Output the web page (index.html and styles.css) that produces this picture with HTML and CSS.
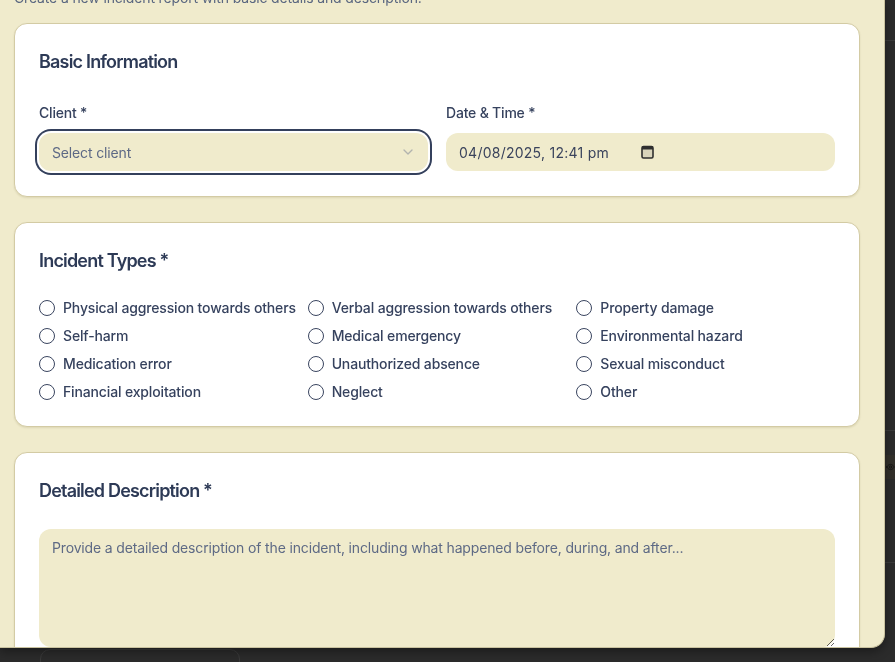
FILE: index.html
```html
<!DOCTYPE html>
<html lang="en">
<head>
<meta charset="utf-8">
<title>New Incident Report</title>
<link rel="stylesheet" href="styles.css">
</head>
<body>
<div class="behind" aria-hidden="true">
  <div class="behind-row r1"></div>
  <div class="behind-row r2"></div>
  <div class="behind-gap"></div>
  <div class="behind-band">
    <svg class="behind-eye" width="16" height="16" viewBox="0 0 24 24" fill="none" stroke="#111" stroke-width="2" stroke-linecap="round" stroke-linejoin="round"><path d="M2 12s3.5-7 10-7 10 7 10 7-3.5 7-10 7S2 12 2 12z"/><circle cx="12" cy="12" r="3"/></svg>
  </div>
  <div class="behind-row r3"></div>
  <div class="behind-foot"><span class="behind-btn"></span></div>
</div>

<div class="modal" role="dialog" aria-label="New incident report">
  <div class="modal-body">
    <p class="subtitle">Create a new incident report with basic details and description.</p>

    <section class="card card-basic">
      <h2 class="card-title">Basic Information</h2>
      <div class="field-grid">
        <div class="field">
          <label class="label">Client *</label>
          <button class="select" type="button">
            <span>Select client</span>
            <svg class="chevron" width="16" height="16" viewBox="0 0 24 24" fill="none" stroke="currentColor" stroke-width="2" stroke-linecap="round" stroke-linejoin="round"><path d="m6 9 6 6 6-6"/></svg>
          </button>
        </div>
        <div class="field">
          <label class="label">Date &amp; Time *</label>
          <div class="date-input">
            <span class="date-text">04/08/2025, 12:41 pm</span>
            <svg class="cal" width="13" height="14" viewBox="0 0 13 14"><rect x="1" y="1.5" width="11" height="11.5" rx="1.5" fill="#d9d4bb" stroke="#2f2f2f" stroke-width="1.6"/><rect x="1" y="1.5" width="11" height="3" fill="#2f2f2f"/></svg>
          </div>
        </div>
      </div>
    </section>

    <section class="card card-types">
      <h2 class="card-title">Incident Types *</h2>
      <div class="radio-grid">
        <label class="radio-item"><input type="radio" name="type" class="radio"><span>Physical aggression towards others</span></label>
        <label class="radio-item"><input type="radio" name="type" class="radio"><span>Verbal aggression towards others</span></label>
        <label class="radio-item"><input type="radio" name="type" class="radio"><span>Property damage</span></label>
        <label class="radio-item"><input type="radio" name="type" class="radio"><span>Self-harm</span></label>
        <label class="radio-item"><input type="radio" name="type" class="radio"><span>Medical emergency</span></label>
        <label class="radio-item"><input type="radio" name="type" class="radio"><span>Environmental hazard</span></label>
        <label class="radio-item"><input type="radio" name="type" class="radio"><span>Medication error</span></label>
        <label class="radio-item"><input type="radio" name="type" class="radio"><span>Unauthorized absence</span></label>
        <label class="radio-item"><input type="radio" name="type" class="radio"><span>Sexual misconduct</span></label>
        <label class="radio-item"><input type="radio" name="type" class="radio"><span>Financial exploitation</span></label>
        <label class="radio-item"><input type="radio" name="type" class="radio"><span>Neglect</span></label>
        <label class="radio-item"><input type="radio" name="type" class="radio"><span>Other</span></label>
      </div>
    </section>

    <section class="card">
      <h2 class="card-title">Detailed Description *</h2>
      <textarea class="textarea" placeholder="Provide a detailed description of the incident, including what happened before, during, and after..."></textarea>
    </section>
  </div>
</div>
</body>
</html>
```

FILE: styles.css
```css
* { box-sizing: border-box; }

html, body {
  margin: 0;
  height: 100%;
}

body {
  background: #2b2b2b;
  font-family: Inter, "Noto Sans", Arial, sans-serif;
  letter-spacing: -0.15px;
  overflow: hidden;
}

/* page behind the overlay */
.behind { height: 662px; }
.behind-row { border-bottom: 1px solid #3a3a3a; }
.r1 { height: 41px; }
.r2 { height: 390px; }
.behind-gap { height: 24px; }
.behind-band {
  height: 24px;
  background: #312f2a;
  display: flex;
  align-items: center;
  padding-left: 886px;
}
.r3 { height: 84px; }
.behind-foot { padding: 86px 0 0 40px; }
.behind-btn {
  display: block;
  width: 200px;
  height: 30px;
  border: 1px solid #3a3a3a;
  border-radius: 10px;
}

/* dialog */
.modal {
  position: fixed;
  top: 0;
  left: 0;
  width: 885px;
  height: 648px;
  background: #f0ebcc;
  border-right: 1px solid #c9c29f;
  border-bottom: 1px solid #c9c29f;
  border-radius: 0 0 14px 0;
  overflow: hidden;
  box-shadow: 0 4px 10px rgba(0, 0, 0, 0.35);
}

.modal-body {
  margin-top: -12px;
  padding: 0 24px 0 14px;
}

.subtitle {
  margin: 0 0 15px;
  font-size: 14px;
  line-height: 20px;
  color: #5a6780;
}

.card {
  background: #ffffff;
  border: 1px solid #d3cba4;
  border-radius: 13px;
  box-shadow: 0 1px 2px rgba(80, 70, 20, 0.12);
  padding: 24px;
  margin-bottom: 25px;
}

.card-basic { padding-bottom: 25px; }
.card-types { padding-bottom: 24px; }

.card-title {
  margin: 0;
  font-size: 18px;
  line-height: 28px;
  font-weight: 600;
  letter-spacing: -0.045em;
  color: #2d3a56;
}

.field-grid {
  margin-top: 27px;
  display: grid;
  grid-template-columns: minmax(0, 1fr) minmax(0, 1fr);
  column-gap: 18px;
}

.label {
  display: block;
  font-size: 14px;
  line-height: 20px;
  font-weight: 500;
  letter-spacing: -0.2px;
  color: #36425e;
  margin-bottom: 10px;
}

.select {
  width: 100%;
  height: 38px;
  display: flex;
  align-items: center;
  justify-content: space-between;
  padding: 0 12px 0 13px;
  border: none;
  border-radius: 12px;
  background: #f0ebcc;
  font-family: inherit;
  font-size: 14px;
  letter-spacing: -0.15px;
  color: #5d6985;
  box-shadow: 0 0 0 2px #ffffff, 0 0 0 4px #34405c;
}

.chevron { color: #8a8f9c; opacity: 0.6; }

.date-input {
  height: 38px;
  display: flex;
  align-items: center;
  padding: 0 12px 0 13px;
  border-radius: 12px;
  background: #f0ebcc;
  font-size: 14px;
  color: #3a435c;
}

.date-text {
  width: 182px;
  letter-spacing: 0.25px;
}

.radio-grid {
  margin-top: 23px;
  display: grid;
  grid-template-columns: repeat(3, minmax(0, 1fr));
  column-gap: 10px;
  row-gap: 8px;
}

.radio-item {
  display: flex;
  align-items: center;
  gap: 8px;
  font-size: 14px;
  line-height: 20px;
  font-weight: 500;
  color: #36425e;
  white-space: nowrap;
}

.radio {
  appearance: none;
  -webkit-appearance: none;
  margin: 0;
  width: 16px;
  height: 16px;
  flex: none;
  border: 1px solid #3a4560;
  border-radius: 50%;
  background: #fff;
}

.textarea {
  display: block;
  width: 100%;
  height: 118px;
  margin-top: 24px;
  padding: 9px 12px 9px 13px;
  border: none;
  border-radius: 12px;
  background: #f0ebcc;
  font-family: inherit;
  font-size: 14px;
  line-height: 20px;
  letter-spacing: -0.15px;
  color: #36425e;
  resize: vertical;
  outline: none;
}

.textarea::placeholder { color: #5e6a85; }
```
